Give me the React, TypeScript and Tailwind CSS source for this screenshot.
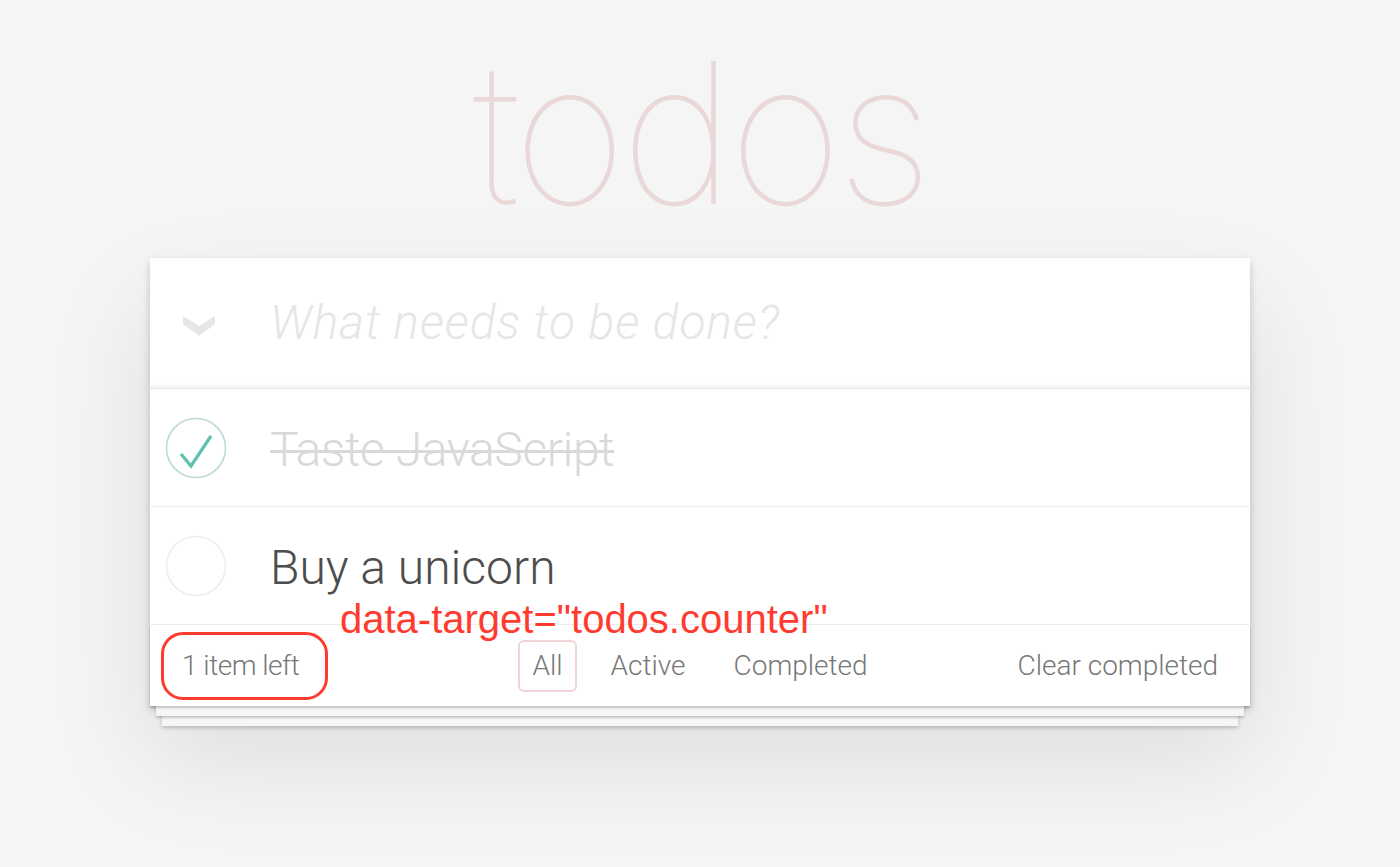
import React from "react";

type Todo = { title: string; done: boolean };

const todos: Todo[] = [
  { title: "Taste JavaScript", done: true },
  { title: "Buy a unicorn", done: false },
];

function Check({ done }: { done: boolean }) {
  return (
    <svg width="62" height="62" viewBox="0 0 62 62" className="shrink-0">
      <circle
        cx="31"
        cy="31"
        r="29.5"
        fill="none"
        stroke={done ? "#bddad5" : "#ededed"}
        strokeWidth="1.6"
      />
      {done && (
        <path
          d="M16 37 L26 49 L46 19"
          fill="none"
          stroke="#5dc2af"
          strokeWidth="3.2"
        />
      )}
    </svg>
  );
}

export default function App() {
  return (
    <div className="min-h-screen bg-[#f5f5f5] flex flex-col items-center font-['Roboto','Liberation_Sans',sans-serif]">
      <h1 className="mt-[35px] h-[223px] text-[196px] leading-none font-thin tracking-[-0.03em] text-[#ead7d7] font-['Inter','Roboto',sans-serif]">
        todos
      </h1>

      <section className="w-[1100px] bg-white shadow-[0_4px_8px_rgba(0,0,0,0.2),0_50px_100px_rgba(0,0,0,0.1)]">
        <div className="h-[130px] flex items-center shadow-[inset_0_-4px_2px_rgba(0,0,0,0.03)]">
          <div className="w-[120px] flex justify-center pr-[22px] pt-[6px]">
            <svg width="34" height="22" viewBox="0 0 34 22">
              <polygon points="1,1 17,11 33,1 33,9 17,21 1,9" fill="#e6e6e6" />
            </svg>
          </div>
          <span className="text-[48px] italic font-light tracking-[0.9px] text-[#e6e6e6]">
            What needs to be done?
          </span>
        </div>

        <ul className="border-t border-[#e6e6e6]">
          {todos.map((t) => (
            <li
              key={t.title}
              className="h-[118px] flex items-center border-b border-[#ededed]"
            >
              <div className="w-[120px] pl-[15px]">
                <Check done={t.done} />
              </div>
              <span
                className={
                  t.done
                    ? "text-[48px] font-light tracking-[-0.4px] text-[#d9d9d9] line-through decoration-[3px] pt-[4px]"
                    : "text-[48px] font-light text-[#4d4d4d] pt-[4px]"
                }
              >
                {t.title}
              </span>
            </li>
          ))}
        </ul>

        <footer className="relative h-[81px] px-[32px] grid grid-cols-[1fr_auto_1fr] items-center text-[28px] font-light text-[#777] shadow-[0_2px_2px_rgba(0,0,0,0.2),0_16px_0_-6px_#f6f6f6,0_18px_2px_-6px_rgba(0,0,0,0.2),0_32px_0_-12px_#f6f6f6,0_34px_4px_-12px_rgba(0,0,0,0.2)]">
          <span className="tracking-[-0.5px]">1 item left</span>
          <ul className="flex items-center gap-[20px]">
            <li className="px-[12px] py-[3px] rounded-[6px] border-2 border-[rgba(175,47,47,0.2)]">
              All
            </li>
            <li className="px-[12px] py-[3px] border-2 border-transparent">Active</li>
            <li className="px-[12px] py-[3px] border-2 border-transparent">Completed</li>
          </ul>
          <span className="justify-self-end">Clear completed</span>

          <div className="absolute left-[11px] top-[7px] w-[167px] h-[68px] rounded-[22px] border-[3px] border-[#ff3b30]" />
          <span className="absolute left-[190px] -top-[26px] text-[40px] leading-none text-[#ff3b30] font-['Liberation_Sans',sans-serif]">
            data-target="todos.counter"
          </span>
        </footer>
      </section>
    </div>
  );
}
